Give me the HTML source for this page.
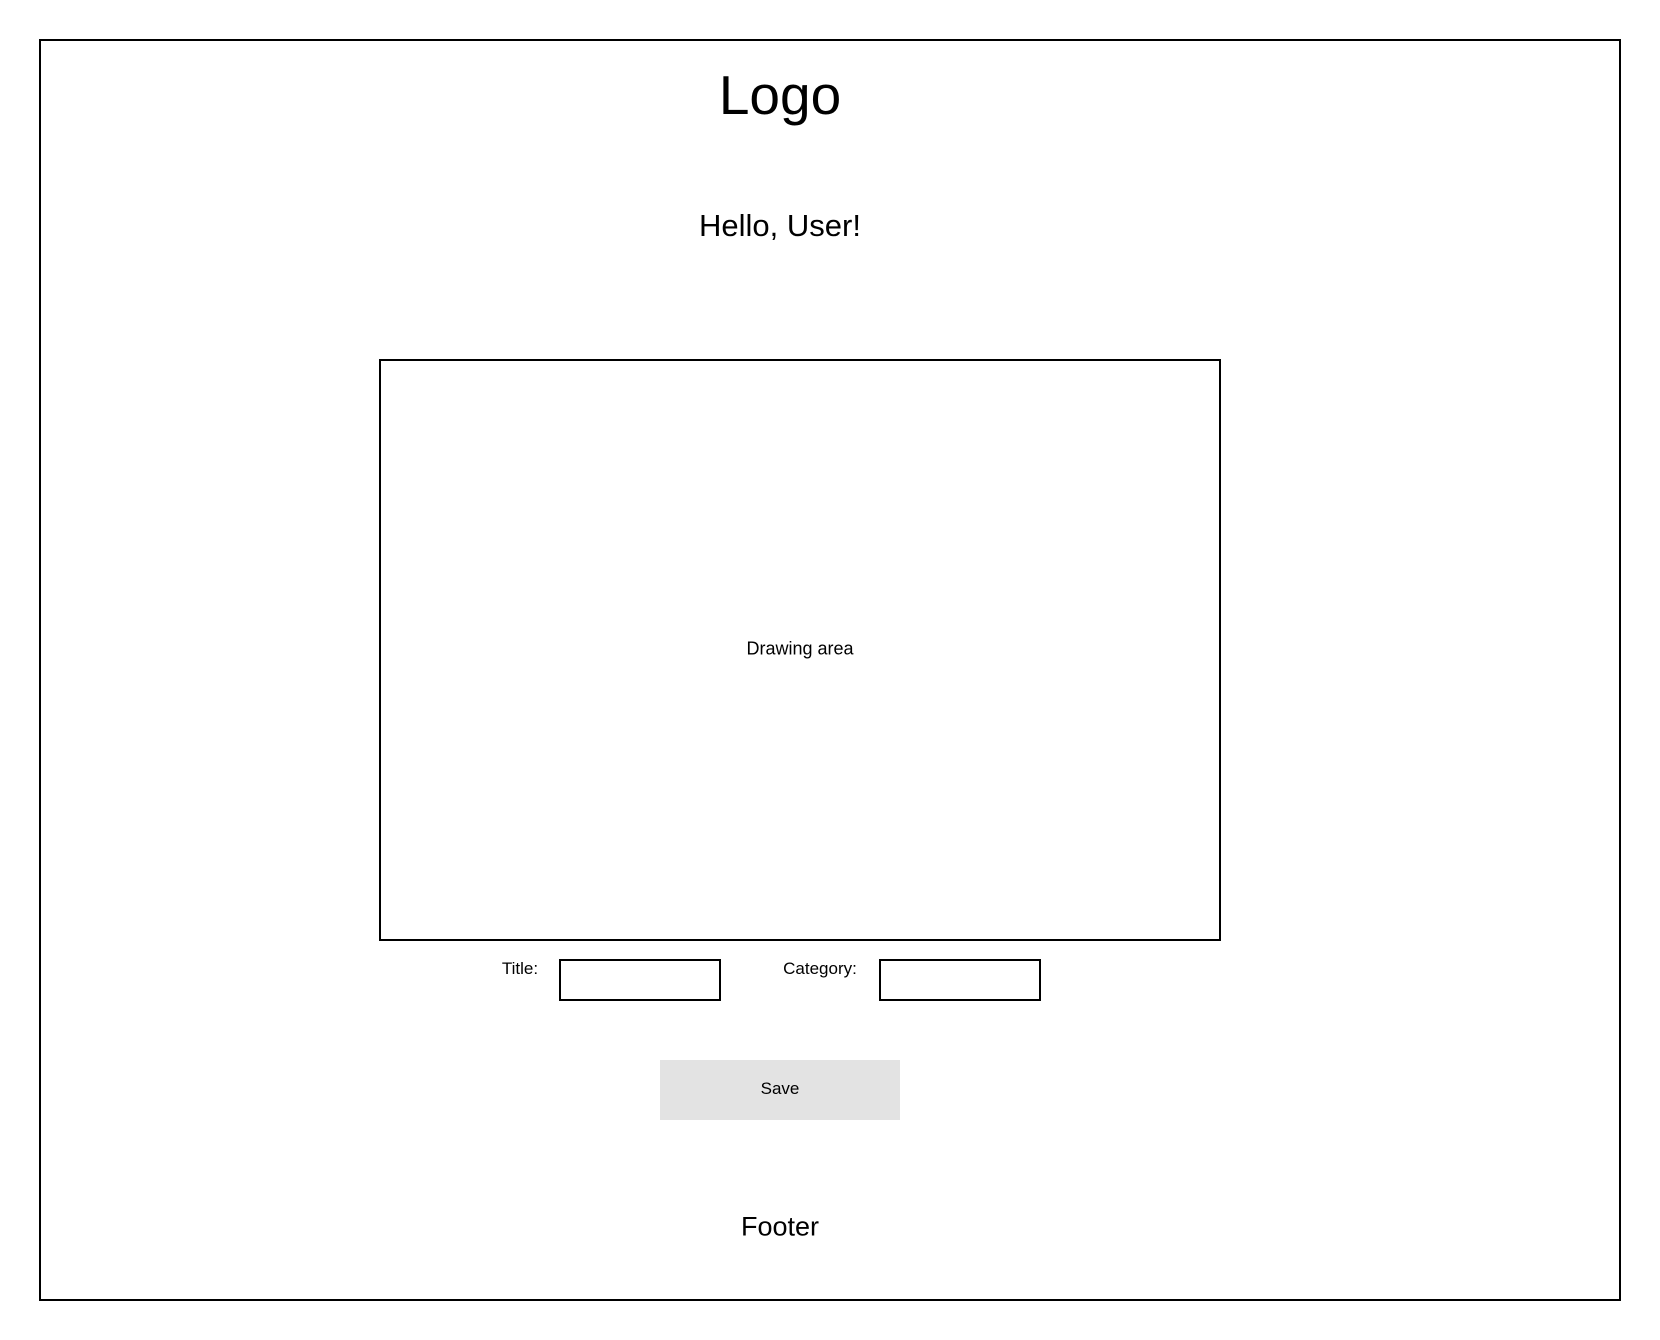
<!DOCTYPE html>
<html><head><meta charset="utf-8"><style>
html,body{margin:0;padding:0;background:#fff;width:1660px;height:1340px;overflow:hidden;font-family:"Liberation Sans",Arial,sans-serif;color:#000}
.a{position:absolute}
.c{position:absolute;text-align:center;white-space:nowrap;transform:translate(-50%,-50%)}
</style></head><body>
<div class="a" style="left:39px;top:39px;width:1582px;height:1262px;border:2px solid #000;box-sizing:border-box"></div>
<div class="c" style="left:780px;top:95px;font-size:55px">Logo</div>
<div class="c" style="left:780px;top:226px;font-size:31px">Hello, User!</div>
<div class="a" style="left:379px;top:359px;width:842px;height:582px;border:2px solid #000;box-sizing:border-box"></div>
<div class="c" style="left:800px;top:649px;font-size:18px">Drawing area</div>
<div class="c" style="left:520px;top:969px;font-size:17px">Title:</div>
<div class="a" style="left:559px;top:959px;width:162px;height:42px;border:2px solid #000;box-sizing:border-box"></div>
<div class="c" style="left:820px;top:969px;font-size:17px">Category:</div>
<div class="a" style="left:879px;top:959px;width:162px;height:42px;border:2px solid #000;box-sizing:border-box"></div>
<div class="a" style="left:660px;top:1060px;width:240px;height:60px;background:#e3e3e3"></div>
<div class="c" style="left:780px;top:1089px;font-size:17px">Save</div>
<div class="c" style="left:780px;top:1227px;font-size:27px">Footer</div>
</body></html>
